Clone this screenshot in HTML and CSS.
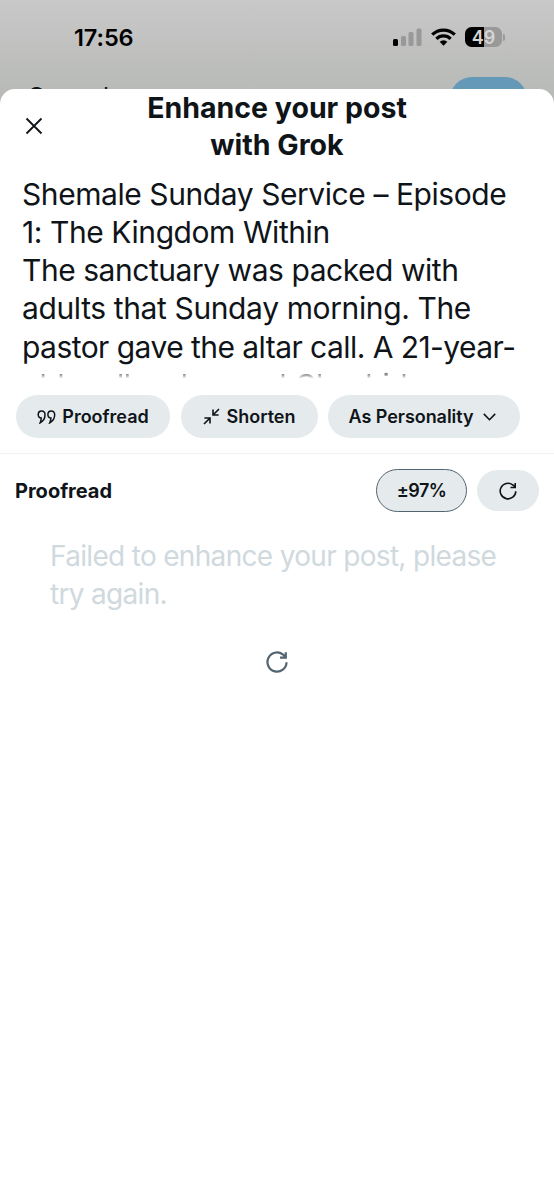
FILE: index.html
```html
<!DOCTYPE html>
<html lang="en">
<head>
<meta charset="utf-8">
<title>Enhance your post</title>
<link rel="stylesheet" href="styles.css">
</head>
<body>
<div class="backdrop">
  <header class="status">
    <span class="clock">17:56</span>
    <div class="status-icons">
      <svg width="29" height="18" viewBox="0 0 29 18"><rect x="0" y="11" width="5" height="7" rx="1.5"/><g fill="#989998"><rect x="8" y="8" width="5" height="10" rx="1.5"/><rect x="15.5" y="4" width="5" height="14" rx="1.5"/><rect x="23.500" y="0.500" width="5" height="17.500" rx="1.5"/></g></svg>
      <svg class="wifi" width="25" height="18" viewBox="0 0 26 18" fill="none" stroke="#000" stroke-width="3.400"><path d="M1.300 6.600a16.500 16.500 0 0 1 23.400 0M5.600 10.900a10.500 10.500 0 0 1 14.800 0"/><path d="M13 18l-4-4a5.700 5.700 0 0 1 8 0z" fill="#000" stroke="none"/></svg>
      <div class="battery"><span>49</span></div>
      <i class="battery-tip"></i>
    </div>
  </header>
  <div class="composer"><span class="cancel">Cancel</span><span class="post-button"></span></div>
</div>
<main class="sheet">
  <div class="heading">
    <svg class="close" width="18" height="18" viewBox="0 0 18 18"><path d="M1.500 1.500l15 15M16.500 1.500l-15 15"/></svg>
    <h1>Enhance your post<br>with Grok</h1>
  </div>
  <div class="post">
    <p class="l1">Shemale Sunday Service – Episode</p>
    <p class="l2">1: The Kingdom Within</p>
    <p class="l3">The sanctuary was packed with</p>
    <p class="l4">adults that Sunday morning. The</p>
    <p class="l5">pastor gave the altar call. A 21-year-</p>
    <p class="l6">old really a her and Clan hid</p>
  </div>
  <nav class="actions">
    <button class="pill proof"><svg width="19" height="14" viewBox="0 0 19 14"><path d="M3.200 12.800C7 10.800 8 8 8 4.800 8 2.500 6.700 1 4.600 1 2.600 1 1.200 2.400 1.200 4.500c0 2 1.200 3.400 3 3.400 0 1.800-.3 3.200-1 4.900zM12.800 12.800c3.800-2 4.900-4.800 4.900-8 0-2.300-1.300-3.800-3.400-3.800-2 0-3.400 1.400-3.400 3.500 0 2 1.200 3.400 3 3.400 0 1.800-.3 3.200-1.100 4.900z"/></svg><span>Proofread</span></button>
    <button class="pill shorten"><svg width="17" height="17" viewBox="0 0 17 17"><path d="M1 16L6.500 10.500M1.400 10h5.600v5.600M16 1L10.500 6.500M10 1.400v5.600h5.600"/></svg><span>Shorten</span></button>
    <button class="pill persona"><span>As Personality</span><svg width="13" height="8" viewBox="0 0 13 8"><path d="M.8.900l5.700 5.800L12.200.9"/></svg></button>
  </nav>
  <section class="result">
    <h2>Proofread</h2>
    <button class="percent">±97%</button>
    <button class="retry"><svg width="18" height="18" viewBox="0 0 18 18"><path d="M16.800 9.200A7.800 7.800 0 1 1 13.700 2.800L15.800 4.500M16.200 1v4.500h-4.700"/></svg></button>
  </section>
  <p class="error">Failed to enhance your post, please<br>try again.</p>
  <div class="again"><svg width="22" height="22" viewBox="0 0 18 18"><path d="M16.800 9.200A7.800 7.800 0 1 1 13.700 2.800L15.800 4.500M16.200 1v4.500h-4.700"/></svg></div>
</main>
</body>
</html>
```
FILE: styles.css
```css
* { box-sizing: border-box; }
body { margin: 0; width: 554px; height: 1200px; overflow: hidden; background: #fff; color: #0f1419; font-family: Inter, "Liberation Sans", sans-serif; }
h1, h2, p { margin: 0; }
svg { display: block; flex: none; }
button { border: 0; margin: 0; padding: 0; color: inherit; font: inherit; background: #e5eaec; display: flex; align-items: center; }
.backdrop { height: 108px; background: linear-gradient(#c8c8c8, #b9bbb8 80%); }
.status { height: 77px; padding: 0 49px 0 74px; display: flex; align-items: center; justify-content: space-between; }
.clock { font-size: 23.500px; font-weight: 600; color: #000; letter-spacing: -.1px; margin-top: -2px; }
.status-icons { display: flex; align-items: center; margin-top: -3px; }
.wifi { margin: 0 9px; }
.battery { width: 37px; height: 20px; border-radius: 6.500px; background: linear-gradient(90deg, #000 51%, #989998 51%); color: #d4d5d4; font-size: 18px; font-weight: 600; display: grid; place-items: center; }
.battery-tip { width: 2px; height: 7px; margin-left: 1px; border-radius: 0 2px 2px 0; background: #989998; }
.composer { display: flex; justify-content: space-between; padding: 0 27px; height: 31px; overflow: hidden; }
.cancel { font-size: 25px; line-height: 38px; padding-top: 1px; }
.post-button { width: 77px; height: 44px; border-radius: 22px; background: #6499b7; }
.sheet { position: relative; margin-top: -19px; height: 1111px; background: #fff; border-radius: 15px 15px 0 0; }
.heading { height: 82px; display: grid; grid-template-columns: 64px 1fr 64px; }
.close { margin: 28px 0 0 24.500px; }
.close path, .pill path, .retry path, .again path { fill: none; stroke: currentColor; stroke-width: 1.8; }
h1 { font-size: 28.500px; line-height: 37px; font-weight: 700; text-align: center; letter-spacing: 0; white-space: nowrap; }
.post { height: 209px; overflow: hidden; padding: 3.500px 22px 0; font-size: 30px; line-height: 38.300px; white-space: nowrap; }
.l1, .l2 { letter-spacing: -.43px; }
.l3 { letter-spacing: -.46px; }
.l4 { letter-spacing: -.38px; }
.l5 { letter-spacing: -.55px; }
.l6 { height: 12.500px; overflow: hidden; letter-spacing: -.45px; word-spacing: .6px; color: transparent; background: linear-gradient(#555 50%, #eee 100%); background-clip: text; }
.actions { height: 74px; padding: 15px 16px 0; display: flex; gap: 10.500px; border-bottom: 1px solid #f1f3f4; }
.pill { height: 43px; border-radius: 22px; font-weight: 600; font-size: 18px; letter-spacing: 0; justify-content: center; white-space: nowrap; }
.proof { width: 154px; gap: 6px; }
.proof path { stroke-width: 1.5; }
.shorten { width: 137px; gap: 7px; }
.persona { width: 192px; gap: 10px; letter-spacing: -.05px; padding-right: 3px; }
.shorten path, .persona path, .retry path { stroke-width: 1.6; }
.result { height: 73px; padding: 0 15px; display: flex; align-items: center; gap: 10px; }
h2 { font-size: 20px; font-weight: 700; letter-spacing: 0; flex: 1; }
.percent { width: 91px; height: 43px; border: 1.5px solid #536471; border-radius: 22px; justify-content: center; font-weight: 600; font-size: 18px; letter-spacing: -.6px; }
.retry { width: 62px; height: 41px; border-radius: 21px; justify-content: center; }
.error { margin: 10px 0 0 50px; color: #cfd9de; font-size: 28px; line-height: 38px; letter-spacing: -.68px; white-space: nowrap; }
.again { display: flex; justify-content: center; margin-top: 38px; color: #536471; }
```
